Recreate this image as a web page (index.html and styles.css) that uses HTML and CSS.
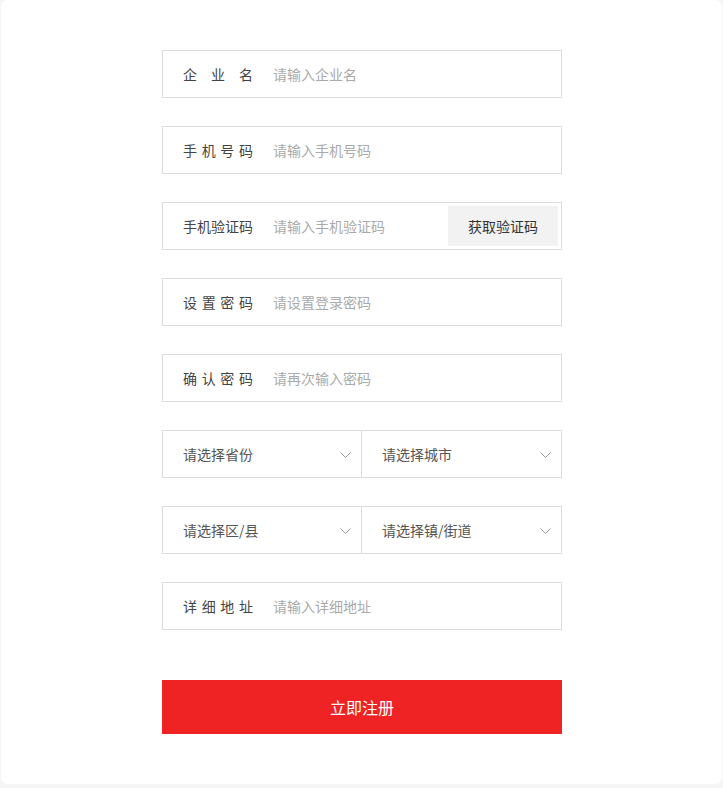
FILE: index.html
```html
<!DOCTYPE html>
<html lang="zh-CN">
<head>
<meta charset="utf-8">
<title>注册</title>
<link rel="stylesheet" href="styles.css">
</head>
<body>
<div class="card">
  <form class="form">
    <div class="field">
      <label class="label">企业名</label>
      <input class="input" type="text" placeholder="请输入企业名">
    </div>
    <div class="field">
      <label class="label">手机号码</label>
      <input class="input" type="text" placeholder="请输入手机号码">
    </div>
    <div class="field">
      <label class="label">手机验证码</label>
      <input class="input" type="text" placeholder="请输入手机验证码">
      <button class="code-btn" type="button">获取验证码</button>
    </div>
    <div class="field">
      <label class="label">设置密码</label>
      <input class="input" type="password" placeholder="请设置登录密码">
    </div>
    <div class="field">
      <label class="label">确认密码</label>
      <input class="input" type="password" placeholder="请再次输入密码">
    </div>
    <div class="field split">
      <div class="select"><span>请选择省份</span><svg class="chev" width="11" height="6" viewBox="0 0 11 6"><path d="M0.5 0.5 L5.5 5.5 L10.5 0.5" fill="none" stroke="#999" stroke-width="1"/></svg></div>
      <div class="select"><span>请选择城市</span><svg class="chev" width="11" height="6" viewBox="0 0 11 6"><path d="M0.5 0.5 L5.5 5.5 L10.5 0.5" fill="none" stroke="#999" stroke-width="1"/></svg></div>
    </div>
    <div class="field split">
      <div class="select"><span>请选择区/县</span><svg class="chev" width="11" height="6" viewBox="0 0 11 6"><path d="M0.5 0.5 L5.5 5.5 L10.5 0.5" fill="none" stroke="#999" stroke-width="1"/></svg></div>
      <div class="select"><span>请选择镇/街道</span><svg class="chev" width="11" height="6" viewBox="0 0 11 6"><path d="M0.5 0.5 L5.5 5.5 L10.5 0.5" fill="none" stroke="#999" stroke-width="1"/></svg></div>
    </div>
    <div class="field">
      <label class="label">详细地址</label>
      <input class="input" type="text" placeholder="请输入详细地址">
    </div>
    <button class="submit" type="button">立即注册</button>
  </form>
</div>
</body>
</html>
```

FILE: styles.css
```css
* { box-sizing: border-box; }
html, body { margin: 0; padding: 0; }
body {
  background: #f5f5f5;
  font-family: "Noto Sans CJK SC", "Microsoft YaHei", sans-serif;
  height: 788px;
  overflow: hidden;
}
.card {
  margin-left: 1px;
  width: 721px;
  height: 784px;
  background: #fff;
  border-radius: 6px;
  padding: 50px 0 0 161px;
}
.form {
  width: 400px;
  display: flex;
  flex-direction: column;
  gap: 28px;
}
.field {
  height: 48px;
  border: 1px solid #dcdcdc;
  display: flex;
  align-items: center;
  padding-left: 20px;
}
.label {
  width: 70px;
  flex: none;
  font-size: 14px;
  color: #444;
  text-align: justify;
  text-align-last: justify;
  margin-right: 20px;
  line-height: 20px;
  margin-top: -1px;
}
.input {
  flex: 1;
  min-width: 0;
  border: none;
  outline: none;
  padding: 0;
  font-family: inherit;
  font-size: 14px;
  color: #333;
  background: transparent;
  height: 20px;
  margin-top: -1px;
}
.input::placeholder { color: #aaa; }
.code-btn {
  flex: none;
  width: 110px;
  height: 40px;
  margin-right: 3px;
  border: none;
  background: #f2f2f2;
  font-family: inherit;
  font-size: 14px;
  color: #333;
  padding: 0;
}
.split {
  padding-left: 0;
}
.select {
  flex: 1;
  height: 100%;
  display: flex;
  align-items: center;
  justify-content: space-between;
  padding: 0 10px 0 20px;
  font-size: 14px;
  color: #555;
}
.select:first-child {
  flex: none;
  width: 198px;
}
.select + .select {
  border-left: 1px solid #dcdcdc;
}
.chev { display: block; margin-top: 2px; }
.submit {
  margin-top: 22px;
  height: 54px;
  border: none;
  background: #ef2224;
  color: #fff;
  font-family: inherit;
  font-size: 16px;
  padding: 0;
}
```
